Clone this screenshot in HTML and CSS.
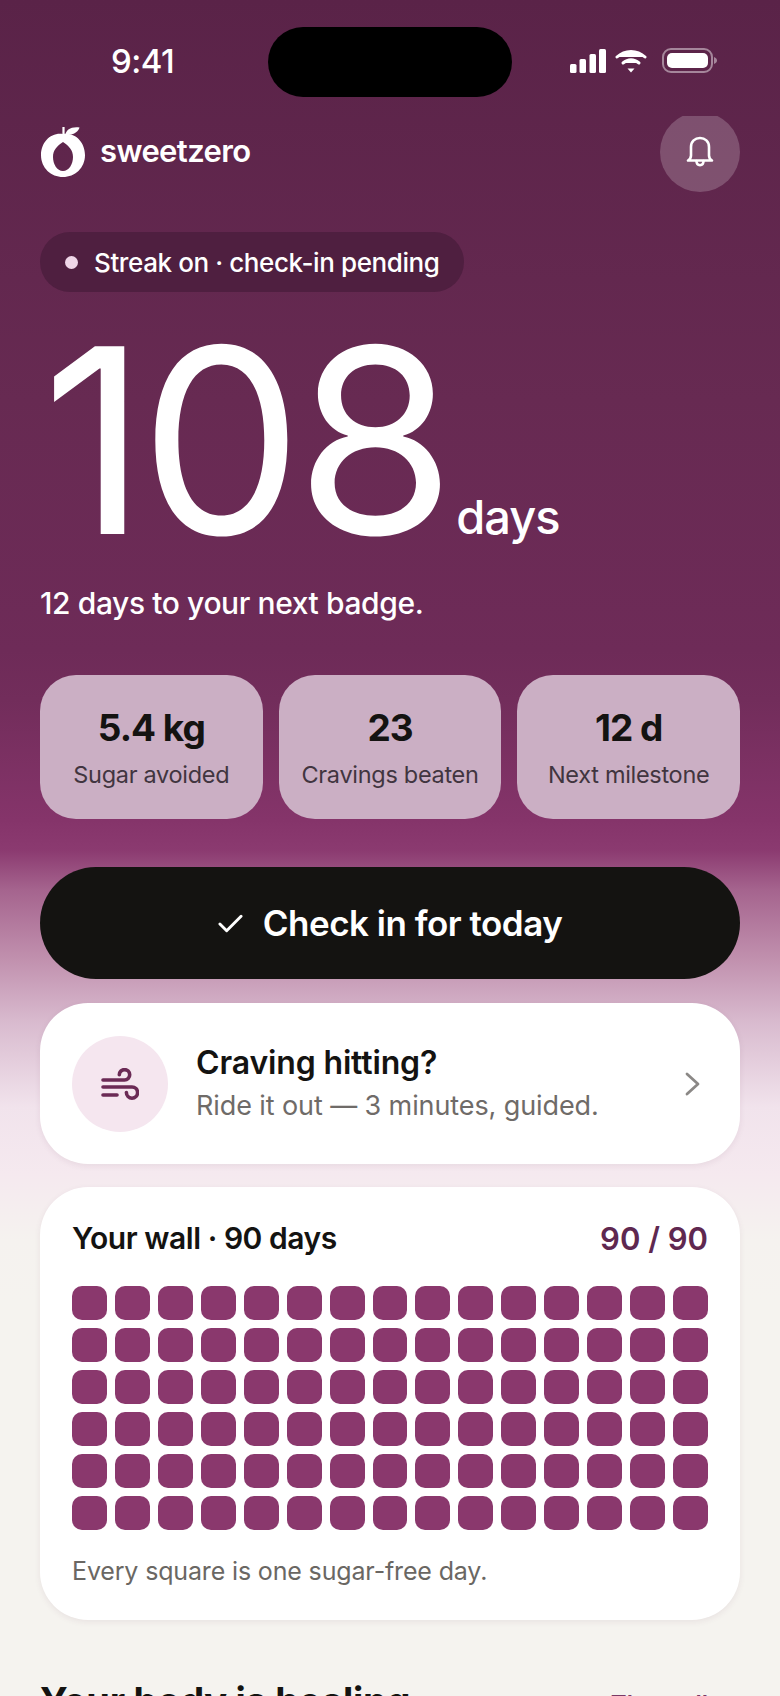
FILE: index.html
```html
<!DOCTYPE html>
<html lang="en">
<head>
  <meta charset="UTF-8">
  <title>sweetzero</title>
  <link rel="stylesheet" href="styles.css">
</head>
<body>
  <div class="screen">
    <div class="status">
      <span class="time">9:41</span>
      <div class="notch"></div>
      <div class="status-icons">
        <svg class="signal" width="36" height="24" viewBox="0 0 36 24"><rect x="0" y="15" width="6.500" height="9" rx="1.500"/><rect x="9.500" y="10" width="6.500" height="14" rx="1.500"/><rect x="19.500" y="5" width="6.500" height="19" rx="1.500"/><rect x="29" y="0" width="7" height="24" rx="1.500"/></svg>
        <svg class="wifi" width="32" height="24" viewBox="0 0 32 24" fill="none" stroke="#fff" stroke-width="3" stroke-linecap="round"><path d="M2 8C10 .5 22 .5 30 8"/><path d="M8 14c5-4.200 11-4.200 16 0"/><path d="M12.500 19.500h7L16 23.500z" fill="#fff" stroke="none"/></svg>
        <svg width="55" height="25" viewBox="0 0 55 25"><rect x="1" y="1" width="49" height="23" rx="8" fill="none" stroke="#fff" stroke-opacity=".45" stroke-width="2"/><rect x="5" y="5" width="41" height="15" rx="5" fill="#fff"/><path d="M52 9c2 .8 3 2 3 3.500s-1 2.700-3 3.500z" fill="#fff" fill-opacity=".45"/></svg>
      </div>
    </div>

    <header class="top">
      <div class="logo">
        <svg width="46" height="52" viewBox="0 0 46 52"><path fill-rule="evenodd" fill="#fff" d="M23 8C35 6 45 16 45 29S35 51 23 51 1 42 1 29 11 6 23 8zM23 16c-6 4-10 8-10 15s4 14 10 14 10-7 10-14-4-11-10-15z"/><path d="M23.500 1v8" stroke="#fff" stroke-width="2.200" fill="none"/><path fill="#fff" d="M25.500 8c1-4 5-7.500 14-6.500-1 4-7 9-14 6.500z"/></svg>
        <span class="brand">sweetzero</span>
      </div>
      <button class="bell">
        <svg width="28" height="32" viewBox="0 0 28 32" fill="none" stroke="#fff" stroke-width="2.600" stroke-linejoin="round" stroke-linecap="round"><path d="M2 24.500h24c-1.600-1-3-2.500-3-5V11C23 5.500 19 2 14 2S5 5.500 5 11v8.500c0 2.500-1.400 4-3 5z"/><path d="M10.500 25c0 5.500 7 5.500 7 0"/></svg>
      </button>
    </header>

    <div class="pill"><i class="dot"></i>Streak on · check-in pending</div>

    <div class="count">
      <span class="num">108</span>
      <span class="unit">days</span>
    </div>
    <p class="next">12 days to your next badge.</p>

    <div class="stats">
      <div class="stat"><b>5.4 kg</b><span>Sugar avoided</span></div>
      <div class="stat"><b>23</b><span>Cravings beaten</span></div>
      <div class="stat"><b>12 d</b><span>Next milestone</span></div>
    </div>

    <button class="checkin">
      <svg width="25" height="19" viewBox="0 0 26 19" fill="none" stroke="#fff" stroke-width="3" stroke-linecap="round" stroke-linejoin="round"><path d="M2 10l7 7L24 2"/></svg>
      Check in for today
    </button>

    <div class="card craving">
      <div class="wind">
        <svg width="38" height="32" viewBox="0 0 38 32" fill="none" stroke="#6b2a55" stroke-width="3.600" stroke-linecap="round"><path d="M2 12H23.500a5.200 5.200 0 1 0-5.200-5.200"/><path d="M2 19H31a5.600 5.600 0 1 1-5.600 5.600"/><path d="M2 27H16"/></svg>
      </div>
      <div class="craving-text">
        <h3>Craving hitting?</h3>
        <p>Ride it out — 3 minutes, guided.</p>
      </div>
      <svg class="chev" width="15" height="24" viewBox="0 0 15 24" fill="none" stroke="#8b8886" stroke-width="2.800" stroke-linecap="round" stroke-linejoin="round"><path d="M2 2l11 10L2 22"/></svg>
    </div>

    <div class="card wall">
      <div class="wall-head">
        <h3>Your wall · 90 days</h3>
        <span>90 / 90</span>
      </div>
      <div class="grid" id="grid"></div>
      <p>Every square is one sugar-free day.</p>
    </div>

    <div class="section-head">
      <h2>Your body is healing</h2>
      <a>The wall</a>
    </div>
  </div>

  <script>
    // 90 days on the wall
    const grid = document.getElementById("grid");
    for (let i = 0; i < 90; i++) {
      const cell = document.createElement("div");
      cell.className = "cell";
      grid.appendChild(cell);
    }
  </script>
</body>
</html>
```

FILE: styles.css
```css
* {
  box-sizing: border-box;
}

html, body {
  margin: 0;
  height: 1696px;
  overflow: hidden;
}

body {
  font-family: Inter, "Liberation Sans", sans-serif;
  color: #141311;
}

.screen {
  height: 1696px;
  overflow: hidden;
  padding: 0 40px;
  background: linear-gradient(180deg, #5a2348 0, #672a52 400px, #6e2b58 650px, #722d5b 700px, #85346a 820px, #8b3a70 850px, #a5648e 890px, #c08fad 957px, #d9bbcf 1023px, #f1e3ec 1107px, #f5e9ef 1173px, #f5f2ef 1240px, #f5f3ef 1300px);
}

.status {
  height: 112px;
  padding-top: 27px;
  display: flex;
  justify-content: space-between;
  align-items: flex-start;
  color: #fff;
}

.time {
  width: 228px;
  padding: 16px 0 0 71px;
  font-size: 33px;
  line-height: 36px;
  font-weight: 500;
  letter-spacing: -0.5px;
}

.notch {
  width: 244px;
  height: 70px;
  border-radius: 35px;
  background: #000;
}

.status-icons {
  display: flex;
  align-items: center;
  width: 228px;
  justify-content: flex-end;
  padding: 21px 23px 0 0;
}

.status-icons svg {
  fill: #fff;
}

.signal {
  margin-right: 9px;
}

.wifi {
  margin-right: 15px;
}

.top {
  height: 80px;
  display: flex;
  justify-content: space-between;
  align-items: center;
}

.logo {
  display: flex;
  align-items: center;
  gap: 14px;
}

.brand {
  color: #fff;
  font-size: 31px;
  line-height: 36px;
  font-weight: 600;
  letter-spacing: -0.6px;
  margin-bottom: 2px;
}

.bell {
  width: 80px;
  height: 80px;
  padding: 0;
  border: none;
  border-radius: 50%;
  background: rgba(255, 255, 255, 0.2);
  clip-path: inset(4px 0 0 0);
  display: flex;
  align-items: center;
  justify-content: center;
}

.pill {
  display: inline-flex;
  align-items: center;
  height: 60px;
  margin-top: 40px;
  padding: 0 24px 0 25px;
  border-radius: 30px;
  background: #4f1f40;
  color: #fff;
  font-size: 26px;
  font-weight: 500;
  letter-spacing: -0.4px;
  white-space: nowrap;
}

.dot {
  width: 13px;
  height: 13px;
  margin-right: 16px;
  border-radius: 50%;
  background: #efd6e8;
}

.count {
  display: flex;
  align-items: baseline;
  height: 200px;
  margin-top: 48px;
  color: #fff;
}

.num {
  margin-left: 2px;
  font-size: 258px;
  line-height: 200px;
  letter-spacing: -7px;
}

.unit {
  margin-left: 8px;
  font-size: 47px;
  font-weight: 500;
  letter-spacing: -1px;
}

.next {
  margin: 45px 0 0;
  color: #fff;
  font-size: 30px;
  line-height: 36px;
  font-weight: 500;
  letter-spacing: -0.4px;
}

.stats {
  display: grid;
  grid-template-columns: repeat(3, 1fr);
  gap: 16px;
  margin-top: 54px;
}

.stat {
  height: 144px;
  border-radius: 36px;
  background: #cbafc4;
  display: flex;
  flex-direction: column;
  align-items: center;
  padding-top: 30px;
}

.stat b {
  font-size: 37px;
  line-height: 46px;
  font-weight: 700;
  letter-spacing: -1px;
}

.stat span {
  margin-top: 8px;
  font-size: 23.500px;
  line-height: 32px;
  letter-spacing: -0.3px;
  color: #41353f;
}

.checkin {
  display: flex;
  align-items: center;
  justify-content: center;
  gap: 20px;
  width: 100%;
  height: 112px;
  margin-top: 48px;
  border: none;
  border-radius: 56px;
  background: #141311;
  color: #fff;
  font-family: inherit;
  font-size: 35px;
  font-weight: 600;
  letter-spacing: -0.5px;
}

.card {
  background: #fff;
  border-radius: 48px;
  box-shadow: 0 2px 6px rgba(90, 35, 72, 0.08);
}

.craving {
  display: flex;
  align-items: center;
  height: 161px;
  margin-top: 24px;
  padding: 0 40px 0 32px;
}

.wind {
  width: 96px;
  height: 96px;
  border-radius: 50%;
  background: #f5e6ef;
  display: flex;
  align-items: center;
  justify-content: center;
}

.craving-text {
  flex: 1;
  margin-left: 28px;
}

.craving-text h3 {
  margin: 0;
  font-size: 32px;
  line-height: 40px;
  font-weight: 600;
  letter-spacing: -0.15px;
}

.craving-text p {
  margin: 5px 0 0;
  font-size: 27px;
  line-height: 36px;
  letter-spacing: -0.1px;
  color: #6f6b68;
}

.wall {
  height: 433px;
  margin-top: 23px;
  padding: 32px;
}

.wall-head {
  display: flex;
  justify-content: space-between;
  align-items: center;
  height: 38px;
  margin-bottom: 29px;
}

.wall-head h3 {
  margin: 0;
  font-size: 30px;
  font-weight: 600;
  letter-spacing: -0.45px;
}

.wall-head span {
  font-size: 31px;
  font-weight: 600;
  color: #5f2850;
}

.grid {
  display: grid;
  grid-template-columns: repeat(15, 1fr);
  gap: 8px;
}

.cell {
  height: 34px;
  border-radius: 10px;
  background: #8a386d;
}

.wall p {
  margin: 23px 0 0;
  font-size: 25px;
  line-height: 36px;
  letter-spacing: -0.15px;
  color: #6a6763;
}

.section-head {
  display: flex;
  justify-content: space-between;
  align-items: flex-start;
  margin-top: 58px;
}

.section-head h2 {
  margin: 0;
  font-size: 38px;
  font-weight: 700;
  letter-spacing: -0.3px;
}

.section-head a {
  margin: 12px 32px 0 0;
  font-size: 24px;
  line-height: 30px;
  font-weight: 600;
  color: #7a3a66;
}
```
